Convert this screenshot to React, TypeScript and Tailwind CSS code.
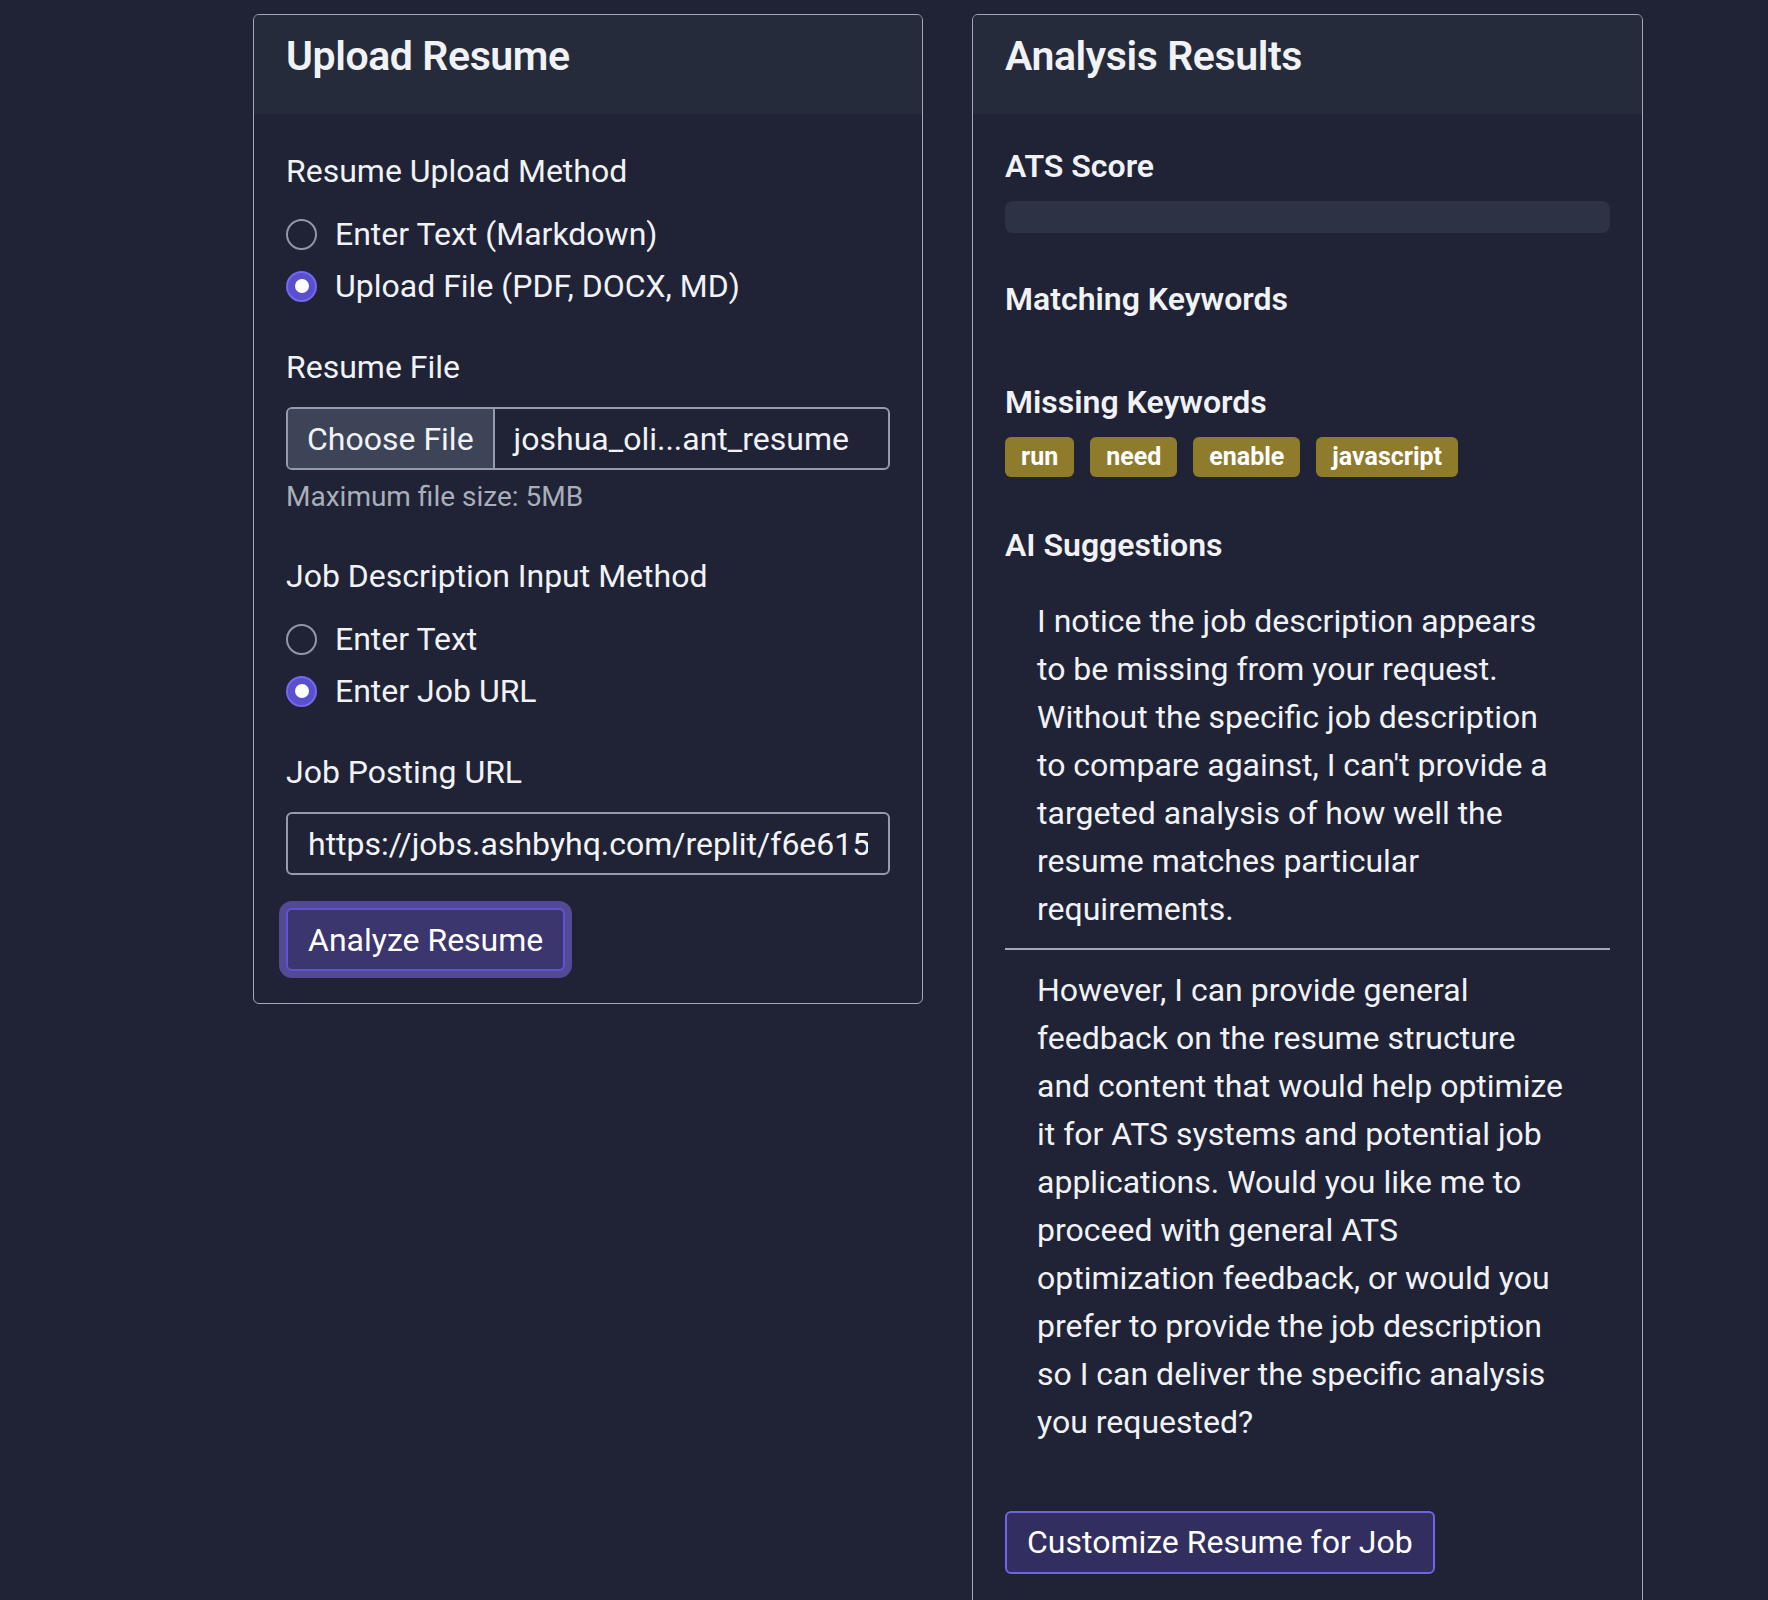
import React from 'react';

type RadioProps = {
  label: string;
  checked?: boolean;
};

function Radio({ label, checked }: RadioProps) {
  return (
    <div className="flex h-[48px] items-center gap-[18px]">
      {checked ? (
        <span className="flex h-[31px] w-[31px] items-center justify-center rounded-full border-2 border-[#7468ec] bg-[#5a4fcf]">
          <span className="h-[14px] w-[14px] rounded-full bg-white" />
        </span>
      ) : (
        <span className="h-[31px] w-[31px] rounded-full border-2 border-[#9197a8]" />
      )}
      <span>{label}</span>
    </div>
  );
}

function CardHeader({ title }: { title: string }) {
  return (
    <div className="h-[99px] bg-[#262b3b] px-[32px] pt-[17px]">
      <h2 className="text-[41px] font-semibold leading-[1.2] tracking-[-0.4px]">{title}</h2>
    </div>
  );
}

function UploadCard() {
  return (
    <div className="w-[670px] shrink-0 overflow-hidden rounded-[6px] border border-[#a2a8ba]">
      <CardHeader title="Upload Resume" />
      <div className="px-[32px] pt-[33px] pb-[32px]">
        {/* Resume input method */}
        <div className="mb-[33px]">
          <div className="mb-[15px]">Resume Upload Method</div>
          <div className="flex flex-col gap-[4px]">
            <Radio label="Enter Text (Markdown)" />
            <Radio label="Upload File (PDF, DOCX, MD)" checked />
          </div>
        </div>

        {/* File */}
        <div className="mb-[34px]">
          <div className="mb-[16px]">Resume File</div>
          <div className="flex h-[63px] overflow-hidden rounded-[6px] border-2 border-[#959bad]">
            <div className="flex items-center border-r-2 border-[#959bad] bg-[#3e4458] px-[19px]">
              Choose File
            </div>
            <div className="flex items-center px-[19px] whitespace-nowrap">joshua_oli...ant_resume</div>
          </div>
          <div className="mt-[6px] text-[28px] leading-[42px] text-[#a9aebb]">Maximum file size: 5MB</div>
        </div>

        {/* Job description method */}
        <div className="mb-[33px]">
          <div className="mb-[15px]">Job Description Input Method</div>
          <div className="flex flex-col gap-[4px]">
            <Radio label="Enter Text" />
            <Radio label="Enter Job URL" checked />
          </div>
        </div>

        <div>
          <div className="mb-[16px]">Job Posting URL</div>
          <input
            readOnly
            value="https://jobs.ashbyhq.com/replit/f6e6158a-2d1f-4c4b-a3a2-2b5f0c1c3d7a"
            className="block h-[63px] w-full rounded-[6px] border-2 border-[#959bad] bg-transparent px-[20px] text-[#f3f4f7] outline-none"
          />
        </div>

        <button className="mt-[33px] h-[63px] rounded-[6px] border-2 border-[#5e52d6] bg-[#3b366d] px-[20px] text-white shadow-[0_0_0_7px_#534a95]">
          Analyze Resume
        </button>
      </div>
    </div>
  );
}

const missing = ['run', 'need', 'enable', 'javascript'];

function ResultsCard() {
  return (
    <div className="w-[671px] shrink-0 overflow-hidden rounded-[6px] border border-[#a2a8ba]">
      <CardHeader title="Analysis Results" />
      <div className="px-[32px] pt-[33px] pb-[33px]">
        <div className="mb-[47px]">
          <h3 className="mb-[16px] font-semibold leading-[1.2]">ATS Score</h3>
          <div className="h-[32px] rounded-[8px] bg-[#2d3245]" />
        </div>

        <div className="mb-[32px]">
          <h3 className="mb-[16px] font-semibold leading-[1.2]">Matching Keywords</h3>
          <div className="min-h-[16px]" />
        </div>

        <div className="mb-[49px]">
          <h3 className="mb-[16px] font-semibold leading-[1.2]">Missing Keywords</h3>
          <div className="flex flex-wrap gap-[16px]">
            {missing.map(k => (
              <span
                key={k}
                className="flex h-[40px] items-center rounded-[6px] bg-[#8e7b2c] px-[16px] text-[25px] font-bold text-white"
              >
                {k}
              </span>
            ))}
          </div>
        </div>

        <div>
          <h3 className="mb-[32px] font-semibold leading-[1.2]">AI Suggestions</h3>
          <p className="px-[32px]">
            I notice the job description appears
            <br />
            to be missing from your request.
            <br />
            Without the specific job description
            <br />
            to compare against, I can't provide a
            <br />
            targeted analysis of how well the
            <br />
            resume matches particular
            <br />
            requirements.
          </p>
          <hr className="mt-[15px] mb-[16px] border-0 border-t-2 border-[#a3a9bb]" />
          <p className="px-[32px]">
            However, I can provide general
            <br />
            feedback on the resume structure
            <br />
            and content that would help optimize
            <br />
            it for ATS systems and potential job
            <br />
            applications. Would you like me to
            <br />
            proceed with general ATS
            <br />
            optimization feedback, or would you
            <br />
            prefer to provide the job description
            <br />
            so I can deliver the specific analysis
            <br />
            you requested?
          </p>
        </div>

        <button className="mt-[65px] h-[63px] rounded-[6px] border-2 border-[#7064e6] bg-[#322e5f] px-[20px] text-white">
          Customize Resume for Job
        </button>
      </div>
    </div>
  );
}

export default function App() {
  return (
    <div className="min-h-screen bg-[#1f2335] text-[32px] leading-[1.5] text-[#f1f2f6] [font-family:Roboto,sans-serif]">
      <div className="flex items-start gap-[49px] pt-[14px] pl-[253px]">
        <UploadCard />
        <ResultsCard />
      </div>
    </div>
  );
}
